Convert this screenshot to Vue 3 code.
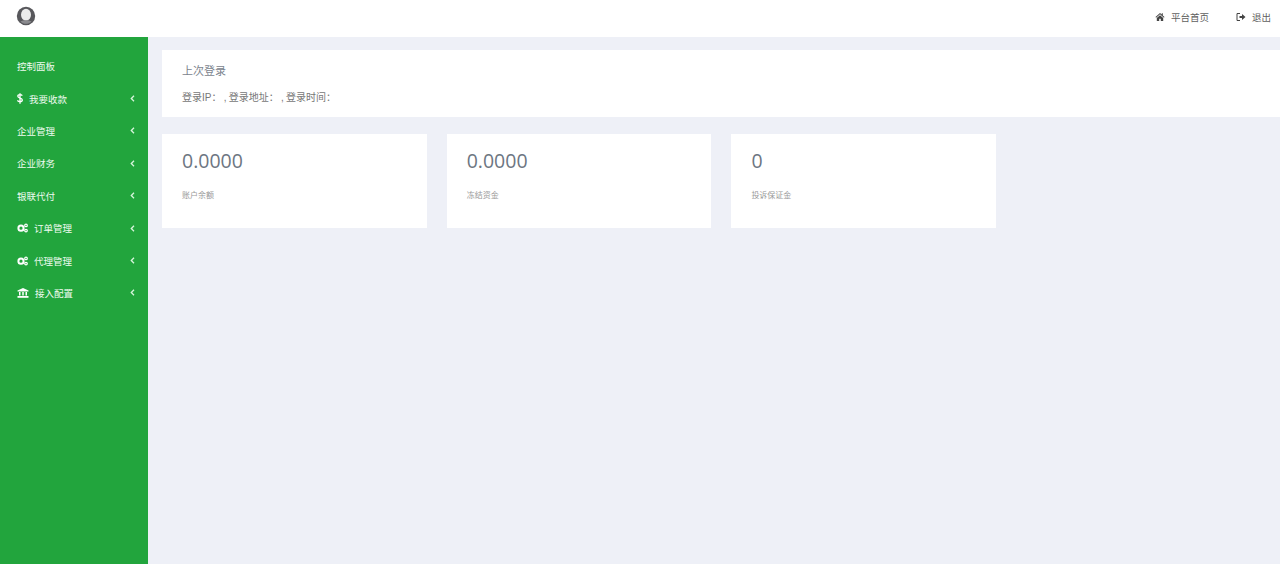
<script setup>
const menu = [
  { label: "控制面板", icon: "", arrow: false },
  { label: "我要收款", icon: "dollar", arrow: true },
  { label: "企业管理", icon: "", arrow: true },
  { label: "企业财务", icon: "", arrow: true },
  { label: "银联代付", icon: "", arrow: true },
  { label: "订单管理", icon: "cogs", arrow: true },
  { label: "代理管理", icon: "cogs", arrow: true },
  { label: "接入配置", icon: "bank", arrow: true },
];

const stats = [
  { value: "0.0000", label: "账户余额" },
  { value: "0.0000", label: "冻结资金" },
  { value: "0", label: "投诉保证金" },
];
</script>

<template>
  <div class="page">
    <header class="topbar">
      <svg class="avatar" width="20" height="20" viewBox="0 0 20 20">
        <circle cx="10" cy="10" r="9.200" fill="#58585c" />
        <ellipse cx="10" cy="8.800" rx="5" ry="6" fill="#ececec" />
        <path d="M4.500 15.500c1.500-1 3.400-1.300 5.500-1.300s4 .3 5.500 1.300c-1.400 1.500-3.400 2.300-5.500 2.300s-4.100-.8-5.500-2.300z" fill="#8a8a8e" />
      </svg>
      <nav class="toplinks">
        <a class="toplink">
          <svg width="10" height="10" viewBox="0 0 10 10">
            <path d="M5 1 0.500 5l.6.700L5 2.300l3.900 3.400.6-.7L7.800 3.500V1.300H6.800v1.300z" fill="#444" />
            <path d="M1.800 6 5 3.200 8.200 6v3H5.800V6.800H4.200V9H1.800z" fill="#444" />
          </svg>
          <span>平台首页</span>
        </a>
        <a class="toplink">
          <svg width="10" height="10" viewBox="0 0 10 10">
            <path d="M4 1.500H1v7h3" fill="none" stroke="#444" stroke-width="1" />
            <path d="M3.500 4h2.500V2l3.500 3L6 8V6H3.500z" fill="#444" />
          </svg>
          <span>退出</span>
        </a>
      </nav>
    </header>

    <div class="body">
      <aside class="sidebar">
        <a v-for="item in menu" :key="item.label" class="menu-item">
          <svg v-if="item.icon === 'dollar'" class="ico-dollar" width="6" height="11" viewBox="0 0 6 11">
            <path d="M5.300 2.700C4.800 2 4 1.700 3 1.700c-1.200 0-2.200.6-2.200 1.600 0 2.200 4.500 1.200 4.500 3.600 0 1.100-1 1.800-2.300 1.800-1.100 0-2-.4-2.600-1.200M3 .2v10.600" fill="none" stroke="#fff" stroke-width="1.300" />
          </svg>
          <svg v-else-if="item.icon === 'cogs'" class="ico-cogs" width="11" height="10" viewBox="0 0 11 10">
            <circle cx="4" cy="5.200" r="2.600" fill="none" stroke="#fff" stroke-width="2" />
            <circle cx="9" cy="2.400" r="1.300" fill="none" stroke="#fff" stroke-width="1.200" />
            <circle cx="9" cy="7.600" r="1.300" fill="none" stroke="#fff" stroke-width="1.200" />
          </svg>
          <svg v-else-if="item.icon === 'bank'" class="ico-bank" width="12" height="10" viewBox="0 0 12 10">
            <path d="M6 0 .5 2.600v.9h11v-.9z" fill="#fff" />
            <path d="M2 4h1.500v3.500H2zM5.250 4h1.500v3.500h-1.500zM8.500 4H10v3.500H8.500z" fill="#fff" />
            <path d="M.5 8h11v1.800H.5z" fill="#fff" />
          </svg>
          <span>{{ item.label }}</span>
          <svg v-if="item.arrow" class="arrow" width="5" height="7" viewBox="0 0 5 7">
            <path d="M4 .8 1.300 3.500 4 6.200" fill="none" stroke="#d8f5dd" stroke-width="1.300" />
          </svg>
        </a>
      </aside>

      <main class="content">
        <section class="login-box">
          <h3>上次登录</h3>
          <p>登录IP： , 登录地址： , 登录时间：</p>
        </section>
        <div class="stats">
          <div v-for="s in stats" :key="s.label" class="stat">
            <div class="value">{{ s.value }}</div>
            <div class="label">{{ s.label }}</div>
          </div>
        </div>
      </main>
    </div>
  </div>
</template>

<style>
html,
body {
  margin: 0;
  padding: 0;
  overflow: hidden;
}
</style>

<style scoped>
.page {
  width: 1280px;
  height: 564px;
  display: flex;
  flex-direction: column;
  font-family: "Liberation Sans", "Noto Sans CJK SC", sans-serif;
  background: #eef0f7;
  overflow: hidden;
}

.topbar {
  flex: 0 0 37px;
  background: #fff;
  display: flex;
  align-items: center;
  justify-content: space-between;
  padding: 0 9px 6px 16px;
  box-sizing: border-box;
  height: 37px;
}

.avatar {
  display: block;
}

.toplinks {
  display: flex;
  gap: 27px;
  margin-top: 2px;
}

.toplink {
  display: flex;
  align-items: center;
  gap: 6px;
  font-size: 9.500px;
  color: #606060;
}

.body {
  flex: 1;
  display: flex;
  min-height: 0;
}

.sidebar {
  width: 148px;
  flex: none;
  background: #22a53d;
  padding-top: 13px;
  box-sizing: border-box;
}

.menu-item {
  height: 32.400px;
  display: flex;
  align-items: center;
  padding: 0 13px 0 17px;
  font-size: 9.500px;
  color: #eefbf0;
}

.ico-dollar {
  margin-right: 6px;
}

.ico-cogs {
  margin-right: 6px;
}

.ico-bank {
  margin-right: 6px;
}

.arrow {
  margin-left: auto;
}

.content {
  flex: 1;
  padding: 13px 0 0 14px;
  min-width: 0;
}

.login-box {
  background: #fff;
  height: 67px;
  padding: 14px 20px 0;
  box-sizing: border-box;
}

.login-box h3 {
  margin: 0;
  font-size: 11px;
  font-weight: normal;
  line-height: 14px;
  color: #7b838d;
}

.login-box p {
  margin: 13px 0 0;
  font-size: 10px;
  line-height: 14px;
  color: #777;
  word-spacing: -0.500px;
}

.stats {
  display: flex;
  gap: 20px;
  margin-top: 17px;
}

.stat {
  width: 264.700px;
  height: 94px;
  background: #fff;
  padding: 15px 20px 0;
  box-sizing: border-box;
}

.value {
  font-family: "Open Sans", "Liberation Sans", sans-serif;
  font-size: 19.500px;
  font-weight: 400;
  line-height: 24px;
  color: #6d7682;
}

.label {
  margin-top: 17px;
  font-size: 8px;
  line-height: 12px;
  color: #999;
}
</style>
